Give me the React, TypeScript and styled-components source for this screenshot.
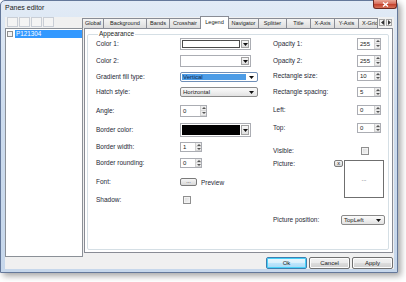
import React from 'react';
import styled, { createGlobalStyle, css } from 'styled-components';

const GlobalStyle = createGlobalStyle`
  html, body { margin: 0; padding: 0; background: #ffffff; }
  body { width: 406px; height: 282px; overflow: hidden; font-family: "Liberation Sans", Arial, sans-serif; }
  * { box-sizing: border-box; }
`;

const Window = styled.div`
  width: 398px;
  height: 273px;
  border: 1px solid #64789a;
  border-radius: 5px 5px 0 0;
  background: linear-gradient(180deg, #e2ebf6 0%, #cddcee 40%, #c6d7eb 100%);
  box-shadow: 3px 3px 6px rgba(0, 0, 0, 0.35);
  padding: 0 3px 3px 4px;
  display: flex;
  flex-direction: column;
`;

const TitleBar = styled.div`
  height: 16px;
  display: flex;
  align-items: flex-start;
  justify-content: space-between;
`;

const Title = styled.span`
  font-size: 7px;
  line-height: 7px;
  margin-top: 3px;
  color: #1b1b1b;
`;

const CloseBtn = styled.div`
  width: 24px;
  height: 9px;
  margin: -1px -3px 0 0;
  border: 1px solid #6e2a22;
  border-top: none;
  border-radius: 0 0 3px 3px;
  background: linear-gradient(180deg, #eaa797 0%, #d8705e 45%, #c4422d 55%, #d7735a 100%);
  display: flex;
  align-items: center;
  justify-content: center;
`;

const Client = styled.div`
  flex: 1;
  display: flex;
  background: #f0f0f0;
`;

const LeftCol = styled.div`
  width: 78px;
  display: flex;
  flex-direction: column;
  padding-bottom: 12px;
`;

const Toolbar = styled.div`
  height: 11px;
  display: flex;
  gap: 1px;
  padding-left: 2px;
`;

const ToolBtn = styled.div`
  width: 11px;
  height: 10px;
  border: 1px solid #c9ced6;
  background: #f4f4f4;
`;

const Tree = styled.div`
  flex: 1;
  background: #ffffff;
  border: 1px solid #8b9097;
  padding-top: 1px;
`;

const TreeItem = styled.div`
  height: 8px;
  display: flex;
  align-items: center;
`;

const TreeCheck = styled.div`
  width: 6px;
  height: 6px;
  margin: 0 2px 0 1px;
  border: 1px solid #8e8f8f;
  background: #f4f4f4;
`;

const TreeLabel = styled.span<{ $selected?: boolean }>`
  flex: 1;
  height: 8px;
  line-height: 8px;
  font-size: 6.3px;
  padding-left: 1px;
  color: ${(p) => (p.$selected ? '#ffffff' : '#000000')};
  background: ${(p) => (p.$selected ? '#3399ff' : 'transparent')};
`;

const RightCol = styled.div`
  flex: 1;
  display: flex;
  flex-direction: column;
`;

const TabRow = styled.div`
  height: 11px;
  display: flex;
  align-items: flex-end;
`;

const Tab = styled.div<{ $w: number; $active?: boolean; $clipped?: boolean }>`
  width: ${(p) => p.$w}px;
  flex-shrink: 0;
  height: 10px;
  border: 1px solid #898c95;
  border-bottom: none;
  margin-left: -1px;
  font-size: 5.6px;
  line-height: 9px;
  color: #1b1b1b;
  white-space: nowrap;
  overflow: hidden;
  text-align: ${(p) => (p.$clipped ? 'left' : 'center')};
  padding-left: ${(p) => (p.$clipped ? 3 : 0)}px;
  background: linear-gradient(180deg, #f4f4f4 0%, #e9e9e9 50%, #dcdcdc 100%);
  ${(p) =>
    p.$active &&
    css`
      height: 13px;
      margin-bottom: -1px;
      background: #ffffff;
      position: relative;
      z-index: 1;
      line-height: 11px;
    `}
`;

const TabArrows = styled.div`
  display: flex;
  gap: 1px;
  margin-left: 1px;
  margin-bottom: 2px;
`;

const TabArrow = styled.div`
  width: 6px;
  height: 7px;
  border: 1px solid #a7a7a7;
  background: #f4f4f4;
  display: flex;
  align-items: center;
  justify-content: center;
`;

const Panel = styled.div`
  flex: 1;
  margin: 0 1px 0 1px;
  background: #ffffff;
  border: 1px solid #898c95;
  padding: 1px 3px 2px 2px;
  display: flex;
`;

const Group = styled.fieldset`
  flex: 1;
  margin: 0;
  border: 1px solid #d5dfe5;
  border-radius: 2px;
  padding: 0 0 0 8px;
  display: flex;
`;

const GroupTitle = styled.legend`
  font-size: 6.5px;
  line-height: 8px;
  color: #1b1b1b;
  padding: 0 1px;
  margin-left: 2px;
`;

const Column = styled.div<{ $w?: number }>`
  ${(p) => (p.$w ? `width: ${p.$w}px;` : 'flex: 1;')}
  display: flex;
  flex-direction: column;
`;

const Row = styled.div<{ $mt: number; $h: number; $top?: boolean }>`
  display: flex;
  align-items: ${(p) => (p.$top ? 'flex-start' : 'center')};
  height: ${(p) => p.$h}px;
  margin-top: ${(p) => p.$mt}px;
  flex-shrink: 0;
`;

const Label = styled.span<{ $w?: number }>`
  width: ${(p) => p.$w ?? 84}px;
  flex-shrink: 0;
  font-size: 6.5px;
  line-height: 8px;
  color: #1e2836;
  white-space: nowrap;
`;

const ColorField = styled.div<{ $w: number }>`
  width: ${(p) => p.$w}px;
  height: 100%;
  border: 1px solid #abadb3;
  background: #ffffff;
  display: flex;
  padding: 1px;
  gap: 1px;
`;

const Swatch = styled.div<{ $color: string; $edge: string }>`
  flex: 1;
  background: ${(p) => p.$color};
  border: 1px solid ${(p) => p.$edge};
`;

const DropBtn = styled.div`
  width: 8px;
  border: 1px solid #a2a2a2;
  background: linear-gradient(180deg, #f7f7f7, #dedede);
  display: flex;
  align-items: center;
  justify-content: center;
`;

const Combo = styled.div<{ $w: number; $focused?: boolean }>`
  width: ${(p) => p.$w}px;
  height: 100%;
  border: 1px solid ${(p) => (p.$focused ? '#6f8fb8' : '#8a8a8a')};
  border-radius: 2px;
  background: ${(p) =>
    p.$focused ? '#ffffff' : 'linear-gradient(180deg, #fbfbfb 0%, #efefef 50%, #e2e2e2 100%)'};
  display: flex;
  align-items: center;
  padding: 1px;
`;

const ComboValue = styled.span<{ $selected?: boolean }>`
  flex: 1;
  height: 100%;
  font-size: 6px;
  line-height: 7px;
  padding-left: 1px;
  white-space: nowrap;
  color: ${(p) => (p.$selected ? '#0e2a4f' : '#1b1b1b')};
  background: ${(p) => (p.$selected ? '#4c9ce6' : 'transparent')};
`;

const ComboArrow = styled.span`
  width: 10px;
  display: flex;
  justify-content: center;
`;

const SpinBox = styled.div<{ $w: number }>`
  width: ${(p) => p.$w}px;
  height: 100%;
  border: 1px solid #abadb3;
  background: #ffffff;
  display: flex;
`;

const SpinValue = styled.span`
  flex: 1;
  font-size: 6px;
  padding-left: 2px;
  display: flex;
  align-items: center;
  color: #1b1b1b;
`;

const SpinBtns = styled.div`
  width: 6px;
  display: flex;
  flex-direction: column;
  border-left: 1px solid #d0d0d0;
  background: #ececec;
`;

const SpinHalf = styled.div`
  flex: 1;
  display: flex;
  align-items: center;
  justify-content: center;
  border-bottom: 1px solid #d6d6d6;
`;

const SmallBtn = styled.div<{ $w: number; $h: number }>`
  width: ${(p) => p.$w}px;
  height: ${(p) => p.$h}px;
  border: 1px solid #7a7a7a;
  border-radius: 2px;
  background: linear-gradient(180deg, #f6f6f6 0%, #e6e6e6 50%, #d8d8d8 100%);
  font-size: 5.5px;
  line-height: ${(p) => p.$h - 3}px;
  text-align: center;
  color: #1b1b1b;
  flex-shrink: 0;
`;

const PreviewText = styled.span`
  font-size: 6.5px;
  color: #1e2836;
  margin-left: 4px;
`;

const Check = styled.div<{ $ml: number }>`
  width: 8px;
  height: 8px;
  margin-left: ${(p) => p.$ml}px;
  border: 1px solid #8f8f8f;
  background: linear-gradient(135deg, #d9d9d9, #f6f6f6);
  box-shadow: inset 0 0 0 1px #f2f2f2;
`;

const PictureBox = styled.div`
  width: 40px;
  height: 38px;
  margin-left: 1px;
  border: 1px solid #6f6f6f;
  background: #ffffff;
  display: flex;
  align-items: center;
  justify-content: center;
  font-size: 6px;
  color: #333333;
`;

const ButtonBar = styled.div`
  height: 16px;
  display: flex;
  justify-content: flex-end;
  align-items: flex-start;
  gap: 2px;
  padding: 4px 1px 0 0;
`;

const DlgButton = styled.div<{ $default?: boolean }>`
  width: 41px;
  height: 12px;
  border: 1px solid ${(p) => (p.$default ? '#3c7fb1' : '#707070')};
  border-radius: 2px;
  background: ${(p) =>
    p.$default
      ? 'linear-gradient(180deg, #eaf6fd 0%, #d9f0fc 50%, #bee6fd 51%, #a7d9f5 100%)'
      : 'linear-gradient(180deg, #f2f2f2 0%, #ebebeb 50%, #dddddd 51%, #cfcfcf 100%)'};
  box-shadow: ${(p) => (p.$default ? 'inset 0 0 0 1px #48d1f8' : 'inset 0 0 0 1px #fcfcfc')};
  font-size: 6px;
  line-height: 10px;
  text-align: center;
  color: #1b1b1b;
`;

const Arrow = ({ up, left, right }: { up?: boolean; left?: boolean; right?: boolean }) => {
  if (left) return <svg width="3" height="5" viewBox="0 0 3 5"><path d="M3 0 L0 2.5 L3 5 Z" fill="#333" /></svg>;
  if (right) return <svg width="3" height="5" viewBox="0 0 3 5"><path d="M0 0 L3 2.5 L0 5 Z" fill="#333" /></svg>;
  return up ? (
    <svg width="4" height="2" viewBox="0 0 4 2"><path d="M0 2 L2 0 L4 2 Z" fill="#555" /></svg>
  ) : (
    <svg width="5" height="3" viewBox="0 0 5 3"><path d="M0 0 L5 0 L2.5 3 Z" fill="#111" /></svg>
  );
};

const SmallDown = () => (
  <svg width="4" height="2" viewBox="0 0 4 2"><path d="M0 0 L4 0 L2 2 Z" fill="#555" /></svg>
);

const Spin = ({ w, v }: { w: number; v: string }) => (
  <SpinBox $w={w}>
    <SpinValue>{v}</SpinValue>
    <SpinBtns>
      <SpinHalf><Arrow up /></SpinHalf>
      <SpinHalf><SmallDown /></SpinHalf>
    </SpinBtns>
  </SpinBox>
);

const tabs: { name: string; w: number; active?: boolean; clipped?: boolean }[] = [
  { name: 'Global', w: 22 },
  { name: 'Background', w: 44 },
  { name: 'Bands', w: 24 },
  { name: 'Crosshair', w: 32 },
  { name: 'Legend', w: 29, active: true },
  { name: 'Navigator', w: 31 },
  { name: 'Splitter', w: 29 },
  { name: 'Title', w: 25 },
  { name: 'X-Axis', w: 25 },
  { name: 'Y-Axis', w: 25 },
  { name: 'X-Grid', w: 20, clipped: true },
];

export default function App() {
  return (
    <>
      <GlobalStyle />
      <Window>
        <TitleBar>
          <Title>Panes editor</Title>
          <CloseBtn>
            <svg width="7" height="5" viewBox="0 0 7 5">
              <path d="M1 0.5 L6 4.5 M6 0.5 L1 4.5" stroke="#ffffff" strokeWidth="1.4" />
            </svg>
          </CloseBtn>
        </TitleBar>
        <Client>
          <LeftCol>
            <Toolbar>
              <ToolBtn />
              <ToolBtn />
              <ToolBtn />
              <ToolBtn />
            </Toolbar>
            <Tree>
              <TreeItem>
                <TreeCheck />
                <TreeLabel $selected>P121304</TreeLabel>
              </TreeItem>
            </Tree>
          </LeftCol>
          <RightCol>
            <TabRow>
              {tabs.map((t) => (
                <Tab key={t.name} $w={t.w} $active={t.active} $clipped={t.clipped}>
                  {t.name}
                </Tab>
              ))}
              <TabArrows>
                <TabArrow><Arrow left /></TabArrow>
                <TabArrow><Arrow right /></TabArrow>
              </TabArrows>
            </TabRow>
            <Panel>
              <Group>
                <GroupTitle>Appearance</GroupTitle>
                <Column $w={177}>
                  <Row $mt={0} $h={12}>
                    <Label>Color 1:</Label>
                    <ColorField $w={71}>
                      <Swatch $color="#ffffff" $edge="#4a4a4a" />
                      <DropBtn><Arrow /></DropBtn>
                    </ColorField>
                  </Row>
                  <Row $mt={5} $h={12}>
                    <Label>Color 2:</Label>
                    <ColorField $w={71}>
                      <Swatch $color="#ffffff" $edge="#ffffff" />
                      <DropBtn><Arrow /></DropBtn>
                    </ColorField>
                  </Row>
                  <Row $mt={5} $h={10}>
                    <Label>Gradient fill type:</Label>
                    <Combo $w={78} $focused>
                      <ComboValue $selected>Vertical</ComboValue>
                      <ComboArrow><Arrow /></ComboArrow>
                    </Combo>
                  </Row>
                  <Row $mt={5} $h={10}>
                    <Label>Hatch style:</Label>
                    <Combo $w={78}>
                      <ComboValue>Horizontal</ComboValue>
                      <ComboArrow><Arrow /></ComboArrow>
                    </Combo>
                  </Row>
                  <Row $mt={8} $h={12}>
                    <Label>Angle:</Label>
                    <Spin w={27} v="0" />
                  </Row>
                  <Row $mt={6} $h={14}>
                    <Label>Border color:</Label>
                    <ColorField $w={71}>
                      <Swatch $color="#000000" $edge="#000000" />
                      <DropBtn><Arrow /></DropBtn>
                    </ColorField>
                  </Row>
                  <Row $mt={5} $h={10}>
                    <Label>Border width:</Label>
                    <Spin w={22} v="1" />
                  </Row>
                  <Row $mt={6} $h={10}>
                    <Label>Border rounding:</Label>
                    <Spin w={22} v="0" />
                  </Row>
                  <Row $mt={9} $h={10}>
                    <Label>Font:</Label>
                    <SmallBtn $w={17} $h={8}>...</SmallBtn>
                    <PreviewText>Preview</PreviewText>
                  </Row>
                  <Row $mt={8} $h={10}>
                    <Label>Shadow:</Label>
                    <Check $ml={3} />
                  </Row>
                </Column>
                <Column>
                  <Row $mt={0} $h={12}>
                    <Label>Opacity 1:</Label>
                    <Spin w={24} v="255" />
                  </Row>
                  <Row $mt={5} $h={12}>
                    <Label>Opacity 2:</Label>
                    <Spin w={24} v="255" />
                  </Row>
                  <Row $mt={4} $h={10}>
                    <Label>Rectangle size:</Label>
                    <Spin w={24} v="10" />
                  </Row>
                  <Row $mt={6} $h={10}>
                    <Label>Rectangle spacing:</Label>
                    <Spin w={24} v="5" />
                  </Row>
                  <Row $mt={8} $h={10}>
                    <Label>Left:</Label>
                    <Spin w={24} v="0" />
                  </Row>
                  <Row $mt={8} $h={10}>
                    <Label>Top:</Label>
                    <Spin w={24} v="0" />
                  </Row>
                  <Row $mt={13} $h={9}>
                    <Label>Visible:</Label>
                    <Check $ml={4} />
                  </Row>
                  <Row $mt={5} $h={38} $top>
                    <Label $w={61}>Picture:</Label>
                    <SmallBtn $w={9} $h={7}>x</SmallBtn>
                    <PictureBox>...</PictureBox>
                  </Row>
                  <Row $mt={17} $h={10}>
                    <Label $w={68}>Picture position:</Label>
                    <Combo $w={44}>
                      <ComboValue>TopLeft</ComboValue>
                      <ComboArrow><Arrow /></ComboArrow>
                    </Combo>
                  </Row>
                </Column>
              </Group>
            </Panel>
            <ButtonBar>
              <DlgButton $default>Ok</DlgButton>
              <DlgButton>Cancel</DlgButton>
              <DlgButton>Apply</DlgButton>
            </ButtonBar>
          </RightCol>
        </Client>
      </Window>
    </>
  );
}
